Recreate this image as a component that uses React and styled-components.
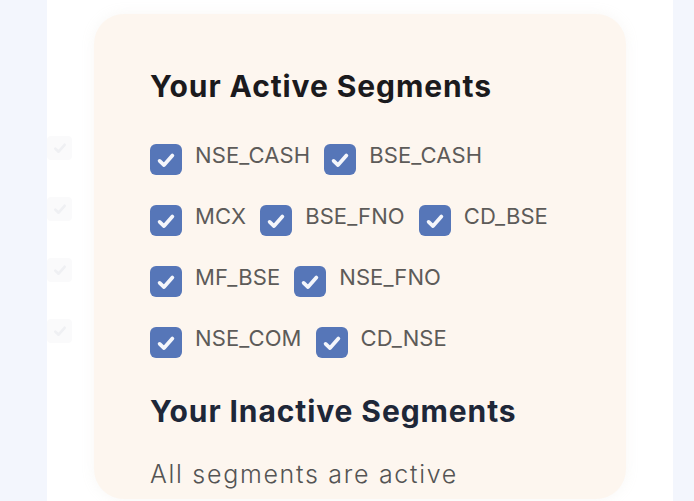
import React from "react";
import styled, { createGlobalStyle } from "styled-components";

const GlobalStyle = createGlobalStyle`
  html, body {
    margin: 0;
    padding: 0;
    background: #f3f6fd;
    font-family: "Inter", "Open Sans", sans-serif;
  }
`;

const Page = styled.div`
  display: flex;
  height: 501px;
  overflow: hidden;
`;

const Panel = styled.div`
  display: flex;
  width: 626px;
  margin-left: 47px;
  padding-top: 14px;
  background: #ffffff;
`;

const GhostColumn = styled.div`
  display: flex;
  flex-direction: column;
  gap: 37px;
  width: 47px;
  padding-top: 122px;
`;

const GhostBox = styled.div`
  width: 25px;
  height: 24px;
  border-radius: 4px;
  background: rgba(40, 60, 90, 0.025);
  display: flex;
  align-items: center;
  justify-content: center;
`;

const Card = styled.div`
  width: 532px;
  height: 485px;
  box-sizing: border-box;
  padding: 52px 56px 0;
  border-radius: 30px;
  background: #fdf6ef;
  box-shadow: 0 0 14px rgba(200, 190, 170, 0.12);
`;

const Heading = styled.h2`
  margin: 0;
  font-size: 30px;
  font-weight: 700;
  letter-spacing: 0.9px;
  line-height: 40px;
  color: ${(p) => p.$color || "#1b1a1d"};
`;

const Segments = styled.div`
  display: flex;
  flex-direction: column;
  gap: 30px;
  margin: 38px 0 33px;
`;

const Row = styled.div`
  display: flex;
  gap: 14px;
`;

const Item = styled.label`
  display: flex;
  align-items: flex-start;
  gap: 13px;
  height: 31px;
`;

const Box = styled.span`
  display: flex;
  align-items: center;
  justify-content: center;
  width: 32px;
  height: 31px;
  border-radius: 6px;
  background: #5676b8;
`;

const Label = styled.span`
  font-size: 22px;
  line-height: 22px;
  color: #5d5b59;
  letter-spacing: 0.1px;
`;

const Note = styled.p`
  margin: 28px 0 0;
  font-size: 25px;
  font-weight: 300;
  letter-spacing: 1.7px;
  color: #545454;
`;

const Check = ({ size = 22, color = "#f4f6fb" }) => (
  <svg width={size} height={size} viewBox="0 0 20 20" fill="none">
    <path
      d="M4.2 10.8 L8.2 14.6 L15.8 6"
      stroke={color}
      strokeWidth="3.4"
      strokeLinecap="round"
      strokeLinejoin="round"
    />
  </svg>
);

const rows = [
  ["NSE_CASH", "BSE_CASH"],
  ["MCX", "BSE_FNO", "CD_BSE"],
  ["MF_BSE", "NSE_FNO"],
  ["NSE_COM", "CD_NSE"],
];

export default function App() {
  return (
    <Page>
      <GlobalStyle />
      <Panel>
        <GhostColumn>
          {[0, 1, 2, 3].map((i) => (
            <GhostBox key={i}>
              <Check size={16} color="rgba(40,60,90,0.05)" />
            </GhostBox>
          ))}
        </GhostColumn>
        <Card>
          <Heading>Your Active Segments</Heading>
          <Segments>
            {rows.map((row, i) => (
              <Row key={i}>
                {row.map((name) => (
                  <Item key={name}>
                    <Box>
                      <Check />
                    </Box>
                    <Label>{name}</Label>
                  </Item>
                ))}
              </Row>
            ))}
          </Segments>
          <Heading $color="#1e2738">Your Inactive Segments</Heading>
          <Note>All segments are active</Note>
        </Card>
      </Panel>
    </Page>
  );
}
